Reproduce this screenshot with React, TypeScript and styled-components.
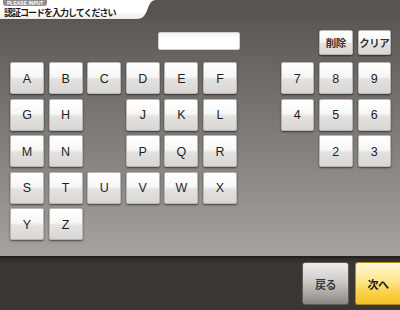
import React from "react";
import styled, { createGlobalStyle } from "styled-components";

const Global = createGlobalStyle`
  html, body { margin: 0; padding: 0; background: #3a3633; }
  body { width: 400px; height: 310px; overflow: hidden; font-family: "Liberation Sans", Arial, "Noto Sans CJK JP", sans-serif; }
`;

const Screen = styled.div`
  width: 400px;
  height: 310px;
  display: flex;
  flex-direction: column;
  background: #58544f;
`;

const Header = styled.div`
  height: 20px;
  flex: none;
  display: flex;
`;

const Tab = styled.div`
  width: 156px;
  height: 19px;
  background: linear-gradient(180deg, #ffffff 60%, #ecebea 100%);
  clip-path: path("M0 0 H156 C151 0 149.5 4 147.5 9 C145.5 15 143 19 137 19 H0 Z");
  display: flex;
  flex-direction: column;
  padding-left: 3px;
  box-sizing: border-box;
`;

const Pill = styled.div`
  align-self: flex-start;
  height: 6px;
  padding: 0 4px;
  background: #8e8e8e;
  border-radius: 0 0 3px 3px;
  color: #fff;
  font-size: 5px;
  font-weight: bold;
  line-height: 6px;
`;

const Title = styled.div`
  margin-top: 1px;
  padding-left: 1px;
  font-family: "Noto Sans CJK JP", sans-serif;
  font-weight: bold;
  font-size: 9px;
  line-height: 11px;
  letter-spacing: -1px;
  color: #1a1a1a;
  white-space: nowrap;
`;

const Main = styled.div`
  flex: 1;
  display: flex;
  padding: 0 9px 0 10px;
  background: linear-gradient(180deg, #5c5855 0%, #7d7976 45%, #a5a29f 100%);
`;

const LetterPanel = styled.div`
  display: flex;
  flex-direction: column;
  padding-top: 12px;
`;

const CodeInput = styled.div`
  width: 82px;
  height: 18px;
  margin-left: 148px;
  margin-bottom: 12px;
  box-sizing: border-box;
  background: linear-gradient(180deg, #f2f2f2 0%, #ffffff 30%);
  border: 1px solid #d0cfcd;
  border-radius: 2px;
`;

const LetterGrid = styled.div`
  display: grid;
  grid-template-columns: repeat(6, 34px);
  grid-auto-rows: 32px;
  column-gap: 4.6px;
  row-gap: 4.5px;
`;

const NumPanel = styled.div`
  margin-left: auto;
  display: flex;
  flex-direction: column;
  padding-top: 10px;
`;

const KeyGrid3 = styled.div<{ $rowH: number }>`
  display: grid;
  grid-template-columns: repeat(3, 33.5px);
  grid-auto-rows: ${(p) => p.$rowH}px;
  column-gap: 5px;
  row-gap: 4.5px;
`;

const ActionGrid = styled(KeyGrid3)`
  margin-bottom: 7px;
`;

const Key = styled.button<{ $col?: number; $jp?: boolean }>`
  grid-column: ${(p) => (p.$col ? `${p.$col}` : "auto")};
  margin: 0;
  padding: 0;
  border: 1px solid #b9b7b5;
  border-radius: 2px;
  background: linear-gradient(180deg, #ffffff 0%, #f7f7f6 45%, #e4e2e0 55%, #d9d7d5 100%);
  box-shadow: 0 1px 2px rgba(0, 0, 0, 0.55);
  color: ${(p) => (p.$jp ? "#333" : "#1e1e1e")};
  font-family: ${(p) =>
    p.$jp ? `"Noto Sans CJK JP", sans-serif` : `"Liberation Sans", Arial, sans-serif`};
  font-size: ${(p) => (p.$jp ? "10.5px" : "12.5px")};
  font-weight: ${(p) => (p.$jp ? "bold" : "normal")};
  letter-spacing: ${(p) => (p.$jp ? "-0.5px" : "0")};
  display: flex;
  align-items: center;
  justify-content: center;
  padding-top: ${(p) => (p.$jp ? "0" : "1px")};
`;

const BottomBar = styled.div`
  height: 54px;
  flex: none;
  box-sizing: border-box;
  border-top: 2px solid #24201e;
  background: linear-gradient(180deg, #2f2b28 0%, #3b3734 12%, #3a3633 100%);
  display: flex;
  justify-content: flex-end;
  align-items: flex-start;
  padding-top: 4px;
  gap: 6px;
`;

const NavButton = styled.button<{ $primary?: boolean }>`
  height: 43px;
  width: ${(p) => (p.$primary ? "45px" : "47px")};
  margin: 0;
  padding: 0;
  border: 1px solid ${(p) => (p.$primary ? "#b08a1e" : "#5e5b58")};
  border-right: ${(p) => (p.$primary ? "none" : undefined)};
  border-radius: ${(p) => (p.$primary ? "3px 0 0 3px" : "3px")};
  background: ${(p) =>
    p.$primary
      ? "linear-gradient(180deg, #fff7d6 0%, #fde58a 45%, #fbcf45 75%, #f7c12a 100%)"
      : "linear-gradient(180deg, #eeedec 0%, #d2d0ce 40%, #a9a6a3 75%, #8a8784 100%)"};
  color: ${(p) => (p.$primary ? "#1a1a1a" : "#3a3a3a")};
  font-family: "Noto Sans CJK JP", sans-serif;
  font-weight: bold;
  font-size: 11px;
  letter-spacing: -0.5px;
`;

type Cell = { label: string; col?: number };

const letterRows: Cell[][] = [
  [{ label: "A" }, { label: "B" }, { label: "C" }, { label: "D" }, { label: "E" }, { label: "F" }],
  [{ label: "G" }, { label: "H" }, { label: "J", col: 4 }, { label: "K" }, { label: "L" }],
  [{ label: "M" }, { label: "N" }, { label: "P", col: 4 }, { label: "Q" }, { label: "R" }],
  [{ label: "S" }, { label: "T" }, { label: "U" }, { label: "V" }, { label: "W" }, { label: "X" }],
  [{ label: "Y", col: 1 }, { label: "Z" }],
];

const numCells: Cell[] = [
  { label: "7", col: 1 },
  { label: "8" },
  { label: "9" },
  { label: "4", col: 1 },
  { label: "5" },
  { label: "6" },
  { label: "2", col: 2 },
  { label: "3" },
];

export default function App() {
  return (
    <>
      <Global />
      <Screen>
        <Header>
          <Tab>
            <Pill>PLEASE INPUT</Pill>
            <Title>認証コードを入力してください</Title>
          </Tab>
        </Header>
        <Main>
          <LetterPanel>
            <CodeInput />
            <LetterGrid>
              {letterRows.flat().map((c) => (
                <Key key={c.label} $col={c.col}>
                  {c.label}
                </Key>
              ))}
            </LetterGrid>
          </LetterPanel>
          <NumPanel>
            <ActionGrid $rowH={25}>
              <Key $col={2} $jp>
                削除
              </Key>
              <Key $jp>クリア</Key>
            </ActionGrid>
            <KeyGrid3 $rowH={32}>
              {numCells.map((c) => (
                <Key key={c.label} $col={c.col}>
                  {c.label}
                </Key>
              ))}
            </KeyGrid3>
          </NumPanel>
        </Main>
        <BottomBar>
          <NavButton>戻る</NavButton>
          <NavButton $primary>次へ</NavButton>
        </BottomBar>
      </Screen>
    </>
  );
}
